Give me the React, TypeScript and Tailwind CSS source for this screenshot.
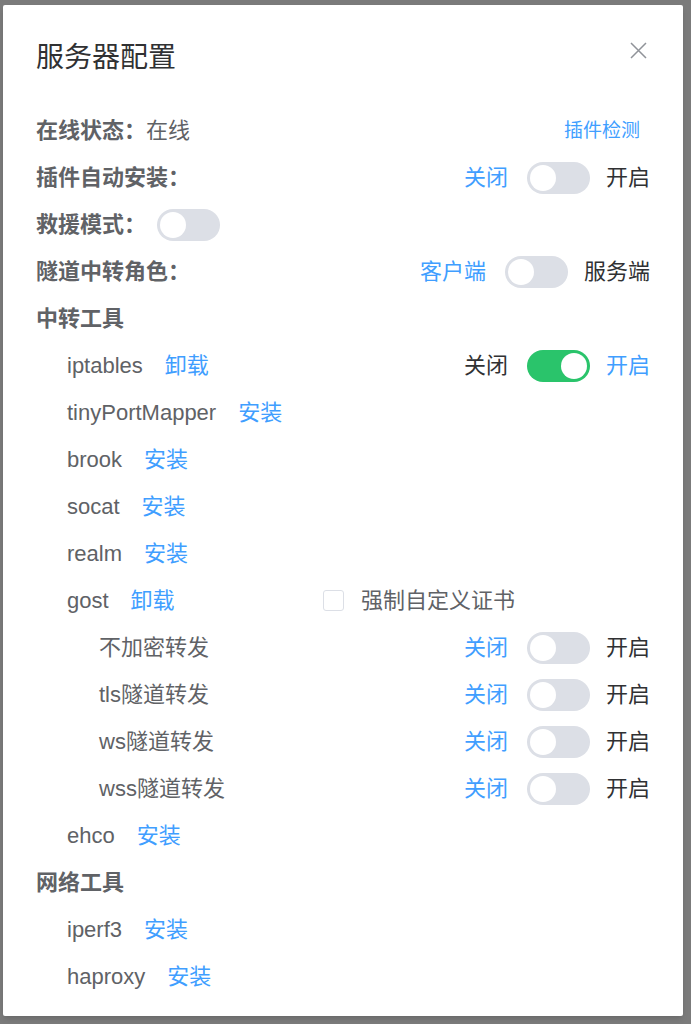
import React from "react";

const FONT = { fontFamily: '"Liberation Sans", "Noto Sans CJK SC", sans-serif' };

function Switch({ on }: { on: boolean }) {
  return (
    <div
      className={
        on
          ? "relative w-[63px] h-[32px] rounded-full bg-[#2ac46b] shrink-0"
          : "relative w-[63px] h-[32px] rounded-full bg-[#dcdfe6] shrink-0"
      }
    >
      <div
        className={
          on
            ? "absolute top-[3px] right-[3px] w-[26px] h-[26px] rounded-full bg-white"
            : "absolute top-[3px] left-[3px] w-[26px] h-[26px] rounded-full bg-white"
        }
      />
    </div>
  );
}

function SwitchGroup({ off, on, active }: { off: string; on: string; active: boolean }) {
  return (
    <div className="flex items-center ml-auto">
      <span className={active ? "text-[#303133]" : "text-[#409eff]"}>{off}</span>
      <div className="ml-[19px] mr-[16px]">
        <Switch on={active} />
      </div>
      <span className={active ? "text-[#409eff]" : "text-[#303133]"}>{on}</span>
    </div>
  );
}

function Row({ children, indent = 0 }: { children: React.ReactNode; indent?: number }) {
  const cls =
    indent === 0
      ? "flex items-center h-[47px]"
      : indent === 1
      ? "flex items-center h-[47px] pl-[31px]"
      : "flex items-center h-[47px] pl-[63px]";
  return <div className={cls}>{children}</div>;
}

function Tool({ name, action }: { name: string; action: string }) {
  return (
    <>
      <span className="text-[#606266]">{name}</span>
      <span className="ml-[22px] text-[#409eff]">{action}</span>
    </>
  );
}

export default function App() {
  return (
    <div className="w-[691px] h-[1024px] bg-[#7b7b7b] pl-[3px] pt-[5px]" style={FONT}>
      <div className="w-[680px] h-[1011px] bg-white rounded-[2px] shadow-md flex flex-col">
        <div className="h-[102px] flex items-center pl-[33px] pr-[36px] pt-[3px]">
          <span className="text-[28px] text-[#303133] leading-none">服务器配置</span>
          <svg className="ml-auto mb-[14px]" width="17" height="17" viewBox="0 0 17 17" fill="none" stroke="#909399" strokeWidth="1.5">
            <path d="M1 1L16 16M16 1L1 16" />
          </svg>
        </div>
        <div className="pl-[33px] pr-[33px] text-[22px] leading-none">
          <Row>
            <span className="font-semibold text-[#606266]">在线状态：</span>
            <span className="text-[#606266]">在线</span>
            <span className="ml-auto mr-[10px] text-[19px] text-[#409eff]">插件检测</span>
          </Row>
          <Row>
            <span className="font-semibold text-[#606266]">插件自动安装：</span>
            <SwitchGroup off="关闭" on="开启" active={false} />
          </Row>
          <Row>
            <span className="font-semibold text-[#606266]">救援模式：</span>
            <div className="ml-[11px]">
              <Switch on={false} />
            </div>
          </Row>
          <Row>
            <span className="font-semibold text-[#606266]">隧道中转角色：</span>
            <SwitchGroup off="客户端" on="服务端" active={false} />
          </Row>
          <Row>
            <span className="font-semibold text-[#606266]">中转工具</span>
          </Row>
          <Row indent={1}>
            <Tool name="iptables" action="卸载" />
            <SwitchGroup off="关闭" on="开启" active={true} />
          </Row>
          <Row indent={1}>
            <Tool name="tinyPortMapper" action="安装" />
          </Row>
          <Row indent={1}>
            <Tool name="brook" action="安装" />
          </Row>
          <Row indent={1}>
            <Tool name="socat" action="安装" />
          </Row>
          <Row indent={1}>
            <Tool name="realm" action="安装" />
          </Row>
          <Row indent={1}>
            <div className="w-[256px] flex items-center">
              <Tool name="gost" action="卸载" />
            </div>
            <div className="w-[21px] h-[21px] border border-[#dcdfe6] rounded-[3px] bg-white" />
            <span className="ml-[17px] text-[#606266]">强制自定义证书</span>
          </Row>
          <Row indent={2}>
            <span className="text-[#606266]">不加密转发</span>
            <SwitchGroup off="关闭" on="开启" active={false} />
          </Row>
          <Row indent={2}>
            <span className="text-[#606266]">tls隧道转发</span>
            <SwitchGroup off="关闭" on="开启" active={false} />
          </Row>
          <Row indent={2}>
            <span className="text-[#606266]">ws隧道转发</span>
            <SwitchGroup off="关闭" on="开启" active={false} />
          </Row>
          <Row indent={2}>
            <span className="text-[#606266]">wss隧道转发</span>
            <SwitchGroup off="关闭" on="开启" active={false} />
          </Row>
          <Row indent={1}>
            <Tool name="ehco" action="安装" />
          </Row>
          <Row>
            <span className="font-semibold text-[#606266]">网络工具</span>
          </Row>
          <Row indent={1}>
            <Tool name="iperf3" action="安装" />
          </Row>
          <Row indent={1}>
            <Tool name="haproxy" action="安装" />
          </Row>
        </div>
      </div>
    </div>
  );
}
